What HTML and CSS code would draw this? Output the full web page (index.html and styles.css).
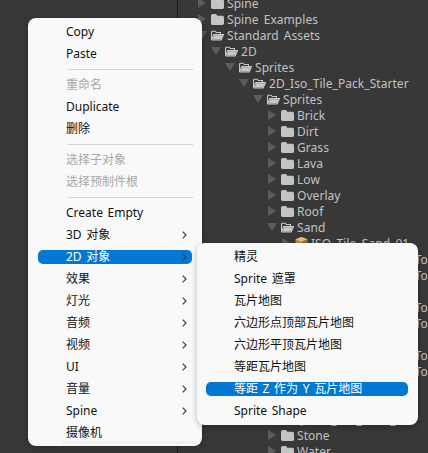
FILE: index.html
```html
<!DOCTYPE html>
<html lang="zh-CN">
<head>
  <meta charset="UTF-8">
  <meta name="viewport" content="width=device-width, initial-scale=1.0">
  <title>Project</title>
  <link rel="stylesheet" href="styles.css">
</head>
<body>
  <svg class="defs" width="0" height="0">
    <symbol id="closed" viewBox="0 0 12 12"><path d="M0 2.5Q0 1 1.5 1H4.5L6 2.5H10.5Q12 2.5 12 4V10Q12 11 10.5 11H1.5Q0 11 0 10Z" fill="#c4c4c4"/></symbol>
    <symbol id="open" viewBox="0 0 14 12"><path d="M0.6 10.5V2.4Q0.6 1.4 1.6 1.4H4.4L5.8 2.8H10.2V4.6M0.6 10.5L3 5H13.4L11 10.9H1Z" fill="#383838" stroke="#c8c8c8" stroke-width="1.2"/><path d="M3.6 5.6H12.6L10.6 10.3H1.6Z" fill="#c8c8c8"/></symbol>
    <symbol id="right" viewBox="0 0 8 10"><path d="M0 0L8 5L0 10Z" fill="#5c5c5c"/></symbol>
    <symbol id="down" viewBox="0 0 10 8"><path d="M0 0H10L5 8Z" fill="#5c5c5c"/></symbol>
    <symbol id="cube" viewBox="0 0 13 14"><path d="M6.5 0L13 2.5V11L6.5 14L0 11V2.5Z" fill="#b98a45"/><path d="M6.5 0L13 2.5L6.5 5.5L0 2.5Z" fill="#e8bd6c"/><path d="M6.5 5.5L13 2.5V11L6.5 14Z" fill="#8f6a38"/></symbol>
    <symbol id="chev" viewBox="0 0 5 8"><path d="M0.7 0.6L4 4L0.7 7.4" fill="none" stroke="#3f3f3f" stroke-width="1.2"/></symbol>
  </svg>

  <div class="tree">
    <div class="row lv0"><svg class="arrow"><use href="#right"/></svg><svg class="folder"><use href="#closed"/></svg>Spine</div>
    <div class="row lv0"><svg class="arrow"><use href="#right"/></svg><svg class="folder"><use href="#closed"/></svg>Spine Examples</div>
    <div class="row lv0"><svg class="arrow arrow-down"><use href="#down"/></svg><svg class="folder"><use href="#open"/></svg>Standard Assets</div>
    <div class="row lv1"><svg class="arrow arrow-down"><use href="#down"/></svg><svg class="folder"><use href="#open"/></svg>2D</div>
    <div class="row lv2"><svg class="arrow arrow-down"><use href="#down"/></svg><svg class="folder"><use href="#open"/></svg>Sprites</div>
    <div class="row lv3"><svg class="arrow arrow-down"><use href="#down"/></svg><svg class="folder"><use href="#open"/></svg>2D_Iso_Tile_Pack_Starter</div>
    <div class="row lv4"><svg class="arrow arrow-down"><use href="#down"/></svg><svg class="folder"><use href="#open"/></svg>Sprites</div>
    <div class="row lv5"><svg class="arrow"><use href="#right"/></svg><svg class="folder"><use href="#closed"/></svg>Brick</div>
    <div class="row lv5"><svg class="arrow"><use href="#right"/></svg><svg class="folder"><use href="#closed"/></svg>Dirt</div>
    <div class="row lv5"><svg class="arrow"><use href="#right"/></svg><svg class="folder"><use href="#closed"/></svg>Grass</div>
    <div class="row lv5"><svg class="arrow"><use href="#right"/></svg><svg class="folder"><use href="#closed"/></svg>Lava</div>
    <div class="row lv5"><svg class="arrow"><use href="#right"/></svg><svg class="folder"><use href="#closed"/></svg>Low</div>
    <div class="row lv5"><svg class="arrow"><use href="#right"/></svg><svg class="folder"><use href="#closed"/></svg>Overlay</div>
    <div class="row lv5"><svg class="arrow"><use href="#right"/></svg><svg class="folder"><use href="#closed"/></svg>Roof</div>
    <div class="row lv5"><svg class="arrow arrow-down"><use href="#down"/></svg><svg class="folder"><use href="#open"/></svg>Sand</div>
    <div class="row lv6"><svg class="arrow"><use href="#right"/></svg><svg class="folder"><use href="#cube"/></svg>ISO_Tile_Sand_01</div>
    <div class="row lv6"><svg class="arrow"><use href="#right"/></svg><svg class="folder"><use href="#cube"/></svg>ISO_Tile_Sand_01_ToDirt</div>
    <div class="row lv6"><svg class="arrow"><use href="#right"/></svg><svg class="folder"><use href="#cube"/></svg>ISO_Tile_Sand_01_ToGrass</div>
    <div class="row lv6"><svg class="arrow"><use href="#right"/></svg><svg class="folder"><use href="#cube"/></svg>ISO_Tile_Sand_02</div>
    <div class="row lv6"><svg class="arrow"><use href="#right"/></svg><svg class="folder"><use href="#cube"/></svg>ISO_Tile_Sand_02_ToDirt</div>
    <div class="row lv6"><svg class="arrow"><use href="#right"/></svg><svg class="folder"><use href="#cube"/></svg>ISO_Tile_Sand_02_ToGrass</div>
    <div class="row lv6"><svg class="arrow"><use href="#right"/></svg><svg class="folder"><use href="#cube"/></svg>ISO_Tile_Sand_03</div>
    <div class="row lv6"><svg class="arrow"><use href="#right"/></svg><svg class="folder"><use href="#cube"/></svg>ISO_Tile_Sand_03_ToDirt</div>
    <div class="row lv6"><svg class="arrow"><use href="#right"/></svg><svg class="folder"><use href="#cube"/></svg>ISO_Tile_Sand_03_ToGrass</div>
    <div class="row lv6"><svg class="arrow"><use href="#right"/></svg><svg class="folder"><use href="#cube"/></svg>ISO_Tile_Sand_04</div>
    <div class="row lv6"><svg class="arrow"><use href="#right"/></svg><svg class="folder"><use href="#cube"/></svg>ISO_Tile_Sand_05</div>
    <div class="row lv6"><svg class="arrow"><use href="#right"/></svg><svg class="folder"><use href="#cube"/></svg>ISO_Tile_Sand_06</div>
    <div class="row lv5"><svg class="arrow"><use href="#right"/></svg><svg class="folder"><use href="#closed"/></svg>Stone</div>
    <div class="row lv5"><svg class="arrow"><use href="#right"/></svg><svg class="folder"><use href="#closed"/></svg>Water</div>
  </div>

  <div class="menu menu-main">
    <div class="item">Copy</div>
    <div class="item">Paste</div>
    <div class="sep"></div>
    <div class="item off">重命名</div>
    <div class="item">Duplicate</div>
    <div class="item">删除</div>
    <div class="sep"></div>
    <div class="item off">选择子对象</div>
    <div class="item off">选择预制件根</div>
    <div class="sep"></div>
    <div class="item">Create Empty</div>
    <div class="item">3D 对象<svg class="chev"><use href="#chev"/></svg></div>
    <div class="item on">2D 对象<svg class="chev"><use href="#chev"/></svg></div>
    <div class="item">效果<svg class="chev"><use href="#chev"/></svg></div>
    <div class="item">灯光<svg class="chev"><use href="#chev"/></svg></div>
    <div class="item">音频<svg class="chev"><use href="#chev"/></svg></div>
    <div class="item">视频<svg class="chev"><use href="#chev"/></svg></div>
    <div class="item">UI<svg class="chev"><use href="#chev"/></svg></div>
    <div class="item">音量<svg class="chev"><use href="#chev"/></svg></div>
    <div class="item">Spine<svg class="chev"><use href="#chev"/></svg></div>
    <div class="item">摄像机</div>
    <div class="strip"></div>
  </div>

  <div class="menu menu-sub">
    <div class="item">精灵</div>
    <div class="item">Sprite 遮罩</div>
    <div class="item">瓦片地图</div>
    <div class="item">六边形点顶部瓦片地图</div>
    <div class="item">六边形平顶瓦片地图</div>
    <div class="item">等距瓦片地图</div>
    <div class="item on">等距 Z 作为 Y 瓦片地图</div>
    <div class="item">Sprite Shape</div>
  </div>
</body>
</html>
```

FILE: styles.css
```css
html, body {
  height: 100%;
}
body {
  margin: 0;
  background: #383838;
  overflow: hidden;
  font-family: "Noto Sans", "Noto Sans CJK SC", sans-serif;
}
.defs {
  position: absolute;
}

/* project tree behind the menus */
.tree {
  box-sizing: border-box;
  height: calc(100% + 5px);
  margin-left: 177px;
  margin-top: -5px;
  border-left: 1px solid #1c1c1c;
  color: #c2c2c2;
  font-size: 12px;
  letter-spacing: 0.05px;
  word-spacing: 2px;
  overflow: hidden;
}
.row {
  display: flex;
  align-items: center;
  height: 16px;
  white-space: nowrap;
}
.lv0 { padding-left: 20px; }
.lv1 { padding-left: 34px; }
.lv2 { padding-left: 48px; }
.lv3 { padding-left: 62px; }
.lv4 { padding-left: 76px; }
.lv5 { padding-left: 90px; }
.lv6 { padding-left: 104px; }
.arrow {
  width: 8px;
  height: 10px;
  margin-right: 5px;
  flex: none;
}
.arrow-down {
  width: 10px;
  height: 8px;
  margin-left: -1px;
  margin-right: 4px;
}
.folder {
  width: 13px;
  height: 13px;
  margin-right: 3px;
  flex: none;
}

/* context menus */
.menu {
  position: absolute;
  box-sizing: border-box;
  background: #f9f9f9;
  border-radius: 8px;
  box-shadow: 0 2px 6px rgba(0, 0, 0, 0.25);
  color: #111;
  font-size: 12px;
}
.menu-main {
  left: 28px;
  top: 18px;
  width: 174px;
  height: 428px;
  padding-top: 3px;
}
.menu-sub {
  left: 197px;
  top: 243px;
  width: 221px;
  height: 182px;
  padding-top: 3px;
}
.item {
  position: relative;
  display: flex;
  align-items: center;
  box-sizing: border-box;
  height: 22px;
  padding-left: 38px;
  padding-bottom: 2px;
  white-space: nowrap;
  word-spacing: 1.5px;
}
.menu-sub .item {
  padding-left: 37px;
}
.off {
  color: #a8a8a8;
}
.on {
  color: #fff;
  isolation: isolate;
}
.on::before {
  content: "";
  position: absolute;
  z-index: -1;
  top: 4px;
  bottom: 4px;
  left: 10px;
  right: 10px;
  background: #0078d4;
  border-radius: 5px;
}
.menu-sub .on::before {
  left: 9px;
}
.sep {
  height: 1px;
  margin: 4px 9px 4px 40px;
  background: #d2d2d2;
}
.chev {
  position: absolute;
  right: 15px;
  top: 7px;
  width: 5px;
  height: 8px;
}
.strip {
  position: absolute;
  left: 34px;
  right: 5px;
  bottom: 2px;
  height: 3px;
  background: #f0f0f0;
}
```
